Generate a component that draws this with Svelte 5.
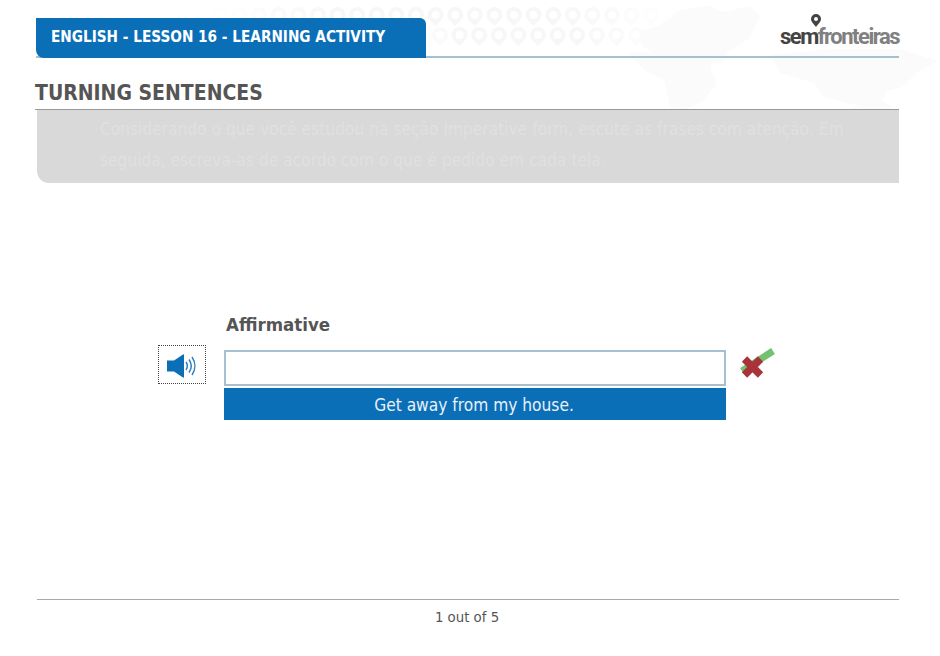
<script>
	// faint pin rows behind the header, they fade out towards both ends
	const topPins = Array.from({ length: 24 }, (_, i) => ({
		x: 212 + i * 19.6,
		o: Math.min(i + 1, 23 - i + 1) / 7
	}));
	const lowPins = Array.from({ length: 12 }, (_, i) => ({
		x: 432 + i * 19.6,
		o: Math.min((i + 2) / 3, (12 - i) / 5)
	}));
	const pins = [
		...topPins.map((p) => ({ ...p, y: 7 })),
		...lowPins.map((p) => ({ ...p, y: 27 }))
	];
</script>

<div class="page">
	<svg class="backdrop" width="940" height="115" viewBox="0 0 940 115" aria-hidden="true">
		{#each pins as p}
			<g transform="translate({p.x} {p.y})" opacity={Math.min(p.o, 1)}>
				<path d="M8 0a8 8 0 0 1 8 8c0 4-4 7-8 11C4 15 0 12 0 8a8 8 0 0 1 8-8zm0 4a4 4 0 1 0 0 8 4 4 0 0 0 0-8z" fill="#f7f7f7" fill-rule="evenodd" />
			</g>
		{/each}
		<g fill="#fbfbfb">
			<path d="M640 32l22-8 18-14 30-4 14 6 26-6 10 10-10 22-22 14-6 12-22-4-16-6-24 2-18-10z" />
			<path d="M628 52h90l-8 14 6 18-14 18-22 10-10-6-6-26-20-10z" />
			<path d="M770 55l60-6 70 0 38 12-22 12-14 14-16 4-6 18-34-6-22-6-10-14-34-10z" />
			<path d="M850 108l30-8 12 6-8 9h-30z" />
		</g>
	</svg>

	<header class="top">
		<div class="tab">ENGLISH - LESSON 16 - LEARNING ACTIVITY</div>
		<div class="logo">
			<svg class="logo-pin" width="10" height="13" viewBox="0 0 10 13" aria-hidden="true">
				<path d="M5 0a5 5 0 0 1 5 5c0 3-3 5-5 8-2-3-5-5-5-8a5 5 0 0 1 5-5zm0 3a2 2 0 1 0 0 4 2 2 0 0 0 0-4z" fill="#444" fill-rule="evenodd" />
			</svg>
			<span class="sem">sem</span><span class="fronteiras">fronteiras</span>
		</div>
	</header>

	<h1>TURNING SENTENCES</h1>

	<section class="intro">
		<p>Considerando o que você estudou na seção Imperative form, escute as frases com atenção. Em seguida, escreva-as de acordo com o que é pedido em cada tela.</p>
	</section>

	<main class="exercise">
		<div class="label">Affirmative</div>
		<button class="speaker" aria-label="Play audio">
			<svg width="30" height="24" viewBox="0 0 30 24">
				<path d="M1 6.500h7l9-6q1-.5 1 .5v22q0 1-1 .5l-9-6H1z" fill="#0b6fb8" />
				<path d="M20 8c1.600 2.400 1.600 5.600 0 8M23 5.500c2.800 4 2.800 9 0 13M26 3c3.800 5.500 3.800 12.500 0 18" fill="none" stroke="#2f80c2" stroke-width="1.500" />
			</svg>
		</button>
		<input class="answer" type="text" aria-label="Answer" />
		<svg class="status" width="38" height="34" viewBox="0 0 38 34" aria-hidden="true">
			<path d="M3 23L34 3" stroke="#72c16e" stroke-width="7" />
			<path d="M5.500 11l16 16M21.500 11l-16 16" stroke="#a8343a" stroke-width="7.500" />
		</svg>
		<div class="phrase">Get away from my house.</div>
	</main>

	<footer>1 out of 5</footer>
</div>

<style>
	:global(body) {
		background: #fff;
	}
	.page {
		position: relative;
		width: 940px;
		height: 656px;
		overflow: hidden;
		box-sizing: border-box;
		padding: 18px 41px 0 36px;
		display: flex;
		flex-direction: column;
		font-family: "DejaVu Sans", "Noto Sans", sans-serif;
		font-stretch: condensed;
		color: #555;
	}
	.backdrop {
		position: absolute;
		top: 0;
		left: 0;
	}
	.top {
		position: relative;
		height: 38px;
		border-bottom: 2px solid #a6c0d0;
		display: flex;
		justify-content: space-between;
		align-items: flex-start;
	}
	.tab {
		width: 375px;
		height: 40px;
		padding-left: 15px;
		background: #0b6fb8;
		border-radius: 0 6px 0 8px;
		color: #fff;
		font-size: 15.2px;
		font-weight: bold;
		line-height: 39px;
		white-space: nowrap;
	}
	.logo {
		position: relative;
		margin-top: 5px;
		font-family: Roboto, "Liberation Sans", sans-serif;
		font-stretch: normal;
		font-size: 22px;
		font-weight: bold;
		line-height: 27px;
		letter-spacing: -1.5px;
		white-space: nowrap;
	}
	.logo-pin {
		position: absolute;
		top: -9px;
		left: 31px;
	}
	.sem {
		color: #444;
	}
	.fronteiras {
		color: #808080;
	}
	h1 {
		position: relative;
		margin: 22px 0 0 -1px;
		height: 29px;
		width: 864px;
		border-bottom: 1px solid #999;
		font-size: 21px;
		font-weight: bold;
		line-height: 26px;
	}
	.intro {
		position: relative;
		margin-left: 1px;
		height: 73px;
		box-sizing: border-box;
		padding: 4px 40px 0 63px;
		background: #d9d9d9;
		border-radius: 0 0 0 12px;
	}
	.intro p {
		margin: 0;
		color: #e0e0e0;
		font-size: 17px;
		letter-spacing: 0.1px;
		line-height: 31px;
	}
	.exercise {
		display: grid;
		grid-template-columns: 48px 502px 38px;
		column-gap: 18px;
		grid-template-rows: auto auto auto;
		margin: 131px 0 0 122px;
		justify-content: start;
	}
	.label {
		grid-column: 2;
		grid-row: 1;
		height: 31px;
		padding-left: 2px;
		font-size: 18.5px;
		font-weight: bold;
		line-height: 22px;
	}
	.speaker {
		grid-column: 1;
		grid-row: 2;
		width: 48px;
		height: 39px;
		padding: 2px 3px 0 0;
		display: flex;
		align-items: center;
		justify-content: center;
		background: #fff;
		border: 1px dotted #444;
	}
	.answer {
		grid-column: 2;
		grid-row: 2;
		width: 502px;
		height: 36px;
		margin-top: 5px;
		box-sizing: border-box;
		background: #fff;
		border: 2px solid #a6c0d0;
		border-radius: 0;
		outline: none;
	}
	.status {
		grid-column: 3;
		grid-row: 2;
		margin: 3px 0 0 -5px;
	}
	.phrase {
		grid-column: 2;
		grid-row: 3;
		height: 32px;
		margin-top: 2px;
		padding-right: 2px;
		background: #0b6fb8;
		color: #e8f1f8;
		font-size: 17.2px;
		line-height: 35px;
		text-align: center;
	}
	footer {
		position: absolute;
		top: 599px;
		left: 37px;
		width: 862px;
		padding-top: 8px;
		padding-right: 2px;
		box-sizing: border-box;
		border-top: 1px solid #aaa;
		font-size: 14.8px;
		line-height: 18px;
		text-align: center;
	}
</style>
